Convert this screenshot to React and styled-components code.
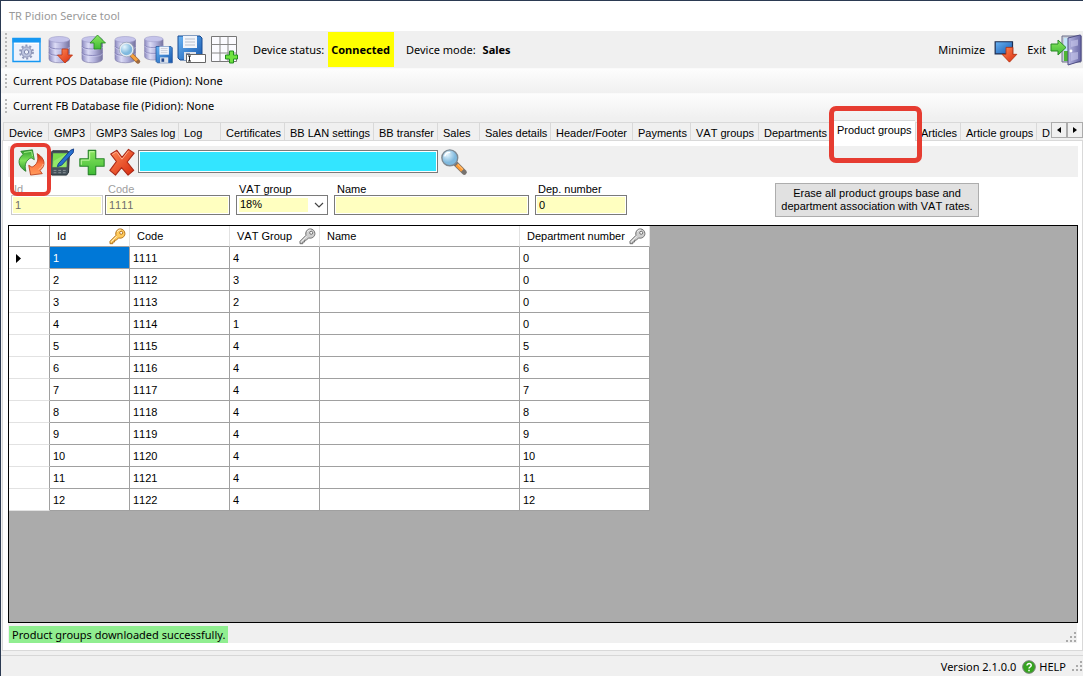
import React from "react";
import styled, { createGlobalStyle, css } from "styled-components";

const ui = `"Noto Sans", "Open Sans", sans-serif`;
const classic = `"Liberation Sans", Arial, sans-serif`;

const GlobalStyle = createGlobalStyle`
  * { box-sizing: border-box; }
  html, body { margin: 0; padding: 0; background: #f0f0f0; }
  body { font-family: ${classic}; font-size: 11px; line-height: 13px; font-kerning: none; color: #000; }
  button, input, select { font: inherit; font-kerning: none; color: inherit; margin: 0; }
`;

const Window = styled.div`
  min-height: 100vh;
  display: flex;
  flex-direction: column;
  border-top: 1px solid #2b3a52;
  border-left: 1px solid #2b3a52;
  background: #f0f0f0;
  overflow: hidden;
`;

const TitleBar = styled.header`
  height: 30px;
  padding: 0 8px;
  display: flex;
  align-items: center;
  background: #fff;
`;

const Title = styled.h1`
  margin: 0;
  font: 400 11px/16px ${ui};
  color: #999;
`;

const Toolbar = styled.div`
  height: 37px;
  padding-left: 4px;
  display: flex;
  align-items: center;
  font: 11px/16px ${ui};
`;

const Grip = styled.span`
  width: 2px;
  height: ${(p) => p.$height}px;
  margin-right: ${(p) => p.$gap}px;
  background: repeating-linear-gradient(#b8b8b8 0 2px, transparent 2px 4px);
`;

const IconButton = styled.button`
  position: relative;
  flex: none;
  width: ${(p) => p.$width || 33}px;
  height: 32px;
  padding: 0;
  border: 0;
  background: none;
  display: flex;
  align-items: center;
  justify-content: center;
  svg { display: block; overflow: visible; }
`;

const StatusLabel = styled.span`
  margin-left: 12px;
  white-space: nowrap;
`;

const StatusValue = styled.strong`
  height: 35px;
  margin-left: 4px;
  padding: 0 4px 0 3px;
  line-height: 35px;
  font-weight: 700;
  background: ${(p) => (p.$highlight ? "#ff0" : "transparent")};
`;

const WindowActions = styled.div`
  margin-left: auto;
  display: flex;
  align-items: center;
  gap: 8px;
`;

const ActionButton = styled.button`
  height: 35px;
  padding: 0;
  border: 0;
  background: none;
  display: flex;
  align-items: center;
  gap: ${(p) => p.$gap}px;
  svg { display: block; }
`;

const FileStrip = styled.div`
  height: 25px;
  padding-left: 4px;
  display: flex;
  align-items: center;
  font: 11px/16px ${ui};
  background: linear-gradient(#fdfdfd, #f0f0f0);
  border-top: 1px solid #fafafa;
`;

const TabStrip = styled.div`
  position: relative;
  z-index: 1;
  height: 23px;
  padding-left: 2px;
  display: flex;
  align-items: flex-end;
`;

const Tab = styled.button`
  position: relative;
  flex: none;
  width: ${(p) => p.$width}px;
  height: 19px;
  padding: 3px 0 0 5px;
  text-align: left;
  white-space: nowrap;
  border: 1px solid #d9d9d9;
  border-width: 1px 0 1px 1px;
  background: #f0f0f0;
  ${(p) =>
    p.$selected &&
    css`
      z-index: 2;
      height: 21px;
      padding-top: 0;
      border-bottom-color: #fff;
      background: #fff;
    `}
`;

const TabScroller = styled.div`
  position: absolute;
  z-index: 3;
  right: 0;
  bottom: 3px;
  display: flex;
`;

const ScrollButton = styled.button`
  width: 16px;
  height: 16px;
  padding: 0;
  border: 1px solid #acacac;
  background: #f0f0f0;
  display: flex;
  align-items: center;
  justify-content: center;
`;

const Highlight = styled.span`
  position: absolute;
  z-index: 5;
  inset: ${(p) => p.$inset};
  border: ${(p) => p.$weight}px solid #e63c31;
  border-radius: 7px;
  pointer-events: none;
`;

const Panel = styled.main`
  flex: 1;
  margin: -1px 0 0 1px;
  padding: 5px 4px 7px 5px;
  display: flex;
  flex-direction: column;
  background: #fff;
  border: 1px solid #d9d9d9;
`;

const PanelTools = styled.div`
  height: 31px;
  padding-left: 9px;
  display: flex;
  align-items: center;
  background: #f0f0f0;
`;

const SearchInput = styled.input`
  width: 300px;
  height: 23px;
  margin: 0 1px;
  padding: 0 3px;
  background: #33e5ff;
  border: 1px solid #7a7a7a;
  outline: 1px solid #fff;
  outline-offset: -2px;
`;

const Form = styled.form`
  padding: 6px 0 0 3px;
  display: flex;
  align-items: flex-start;
  gap: 6px;
  height: 48px;
`;

const PairedFields = styled.div`
  display: flex;
  gap: 2px;
`;

const Field = styled.label`
  display: flex;
  flex-direction: column;
  width: ${(p) => p.$width}px;
  color: ${(p) => (p.$muted ? "#a0a0a0" : "#000")};
`;

const FieldName = styled.span`
  height: 12px;
  padding-left: 3px;
`;

const TextInput = styled.input`
  width: 100%;
  height: 20px;
  padding: 0 3px;
  background: #ffffc0;
  border: 1px solid #7a7a7a;
  outline: 1px solid #fff;
  outline-offset: -2px;
  color: #000;
  &:disabled { color: #6d6d6d; }
  ${(p) => p.$faint && css`border-color: #ccc;`}
`;

const SelectBox = styled.span`
  position: relative;
  display: block;
  svg { position: absolute; right: 4px; top: 7px; pointer-events: none; }
`;

const Select = styled.select`
  appearance: none;
  display: block;
  width: 100%;
  height: 20px;
  padding: 0 19px 1px 3px;
  border: 1px solid #7a7a7a;
  border-radius: 0;
  background: linear-gradient(#ffffc0, #ffffc0) 2px 2px / 69px 14px no-repeat #fff;
`;

const EraseButton = styled.button`
  width: 204px;
  height: 34px;
  margin-left: 142px;
  padding: 0;
  border: 1px solid #adadad;
  background: #e1e1e1;
  text-align: center;
`;

const GridArea = styled.section`
  flex: 1;
  background: #ababab;
  border: 1px solid #000;
`;

const Table = styled.table`
  width: 641px;
  table-layout: fixed;
  border-collapse: separate;
  border-spacing: 0;
  background: #fff;
`;

const HeadCell = styled.th`
  height: 21px;
  padding: 0 3px 0 7px;
  font-weight: 400;
  text-align: left;
  border-right: 1px solid #e2e2e2;
  border-bottom: 1px solid #a0a0a0;
  &:first-child { border-right-color: #a0a0a0; }
`;

const HeadContent = styled.span`
  display: flex;
  align-items: center;
  justify-content: space-between;
  height: 20px;
  white-space: nowrap;
`;

const Cell = styled.td`
  height: 22px;
  padding: 2px 3px 0;
  border-right: 1px solid #a0a0a0;
  border-bottom: 1px solid #a0a0a0;
  ${(p) => p.$selected && css`background: #0078d7; color: #fff;`}
`;

const RowMarker = styled.th`
  height: 22px;
  padding: 2px 0 0 7px;
  border-right: 1px solid #a0a0a0;
  border-bottom: 1px solid #e2e2e2;
  svg { display: block; }
`;

const MessageBar = styled.div`
  height: 20px;
  padding-left: 1px;
  margin-right: 1px;
  display: flex;
  align-items: flex-end;
  justify-content: space-between;
  background: #f0f0f0;
`;

const Message = styled.output`
  height: 17px;
  padding: 0 3px;
  font: 11px/17px ${ui};
  background: #90ee90;
`;

const Footer = styled.footer`
  height: 21px;
  margin-top: 4px;
  padding-top: 1px;
  border-top: 1px solid #d7d7d7;
  display: flex;
  align-items: center;
  justify-content: flex-end;
  gap: 6px;
  font: 11px/16px ${ui};
`;

const HelpButton = styled.button`
  padding: 0;
  border: 0;
  background: none;
  display: flex;
  align-items: center;
  gap: 3px;
`;

/* ---------- icons ---------- */

const Defs = () => (
  <svg width="0" height="0" style={{ position: "absolute" }} aria-hidden="true">
    <defs>
      <linearGradient id="db" x1="0" x2="1"><stop offset="0" stopColor="#8b89c0" /><stop offset=".3" stopColor="#dcdcf6" /><stop offset=".6" stopColor="#b3b2dc" /><stop offset="1" stopColor="#75739f" /></linearGradient>
      <linearGradient id="green" x1="0" y1="0" x2="1" y2="1"><stop offset="0" stopColor="#8fee65" /><stop offset="1" stopColor="#1f9a1e" /></linearGradient>
      <linearGradient id="leaf" x1="0" y1="0" x2="0" y2="1"><stop offset="0" stopColor="#2f9c2c" /><stop offset=".5" stopColor="#7fe25a" /><stop offset="1" stopColor="#2c9a2b" /></linearGradient>
      <linearGradient id="cross" x1="0" y1="0" x2="0" y2="1"><stop offset="0" stopColor="#8be560" /><stop offset="1" stopColor="#3fbb35" /></linearGradient>
      <linearGradient id="red" x1="0" y1="0" x2="1" y2="1"><stop offset="0" stopColor="#ff8a55" /><stop offset="1" stopColor="#d8290e" /></linearGradient>
      <linearGradient id="flame" x1="0" y1="0" x2="0" y2="1"><stop offset="0" stopColor="#ff9a5c" /><stop offset=".5" stopColor="#ff7a45" /><stop offset="1" stopColor="#c92a10" /></linearGradient>
      <linearGradient id="blue" x1="0" y1="0" x2="1" y2="1"><stop offset="0" stopColor="#6ab4f4" /><stop offset="1" stopColor="#1557ae" /></linearGradient>
      <radialGradient id="lens" cx=".35" cy=".3"><stop offset="0" stopColor="#e6f6fe" /><stop offset="1" stopColor="#7fb9de" /></radialGradient>
      <linearGradient id="door" x1="0" x2="1"><stop offset="0" stopColor="#b9b9e2" /><stop offset="1" stopColor="#6665a5" /></linearGradient>
    </defs>
  </svg>
);

const Icon = ({ size = 30, children }) => (
  <svg width={size} height={size} viewBox="0 0 30 30" aria-hidden="true">{children}</svg>
);

const Cylinder = () => (
  <g>
    <path d="M4 5v19c0 5 20.500 5 20.500 0V5z" fill="url(#db)" stroke="#8684ad" strokeWidth=".7" />
    <path d="M4 11c0 4 20.500 4 20.500 0M4 17.500c0 4 20.500 4 20.500 0" fill="none" stroke="#8482b8" strokeWidth=".9" />
    <path d="M4 12c0 4 20.500 4 20.500 0M4 18.500c0 4 20.500 4 20.500 0" fill="none" stroke="#dcdcf6" strokeWidth=".6" opacity=".8" />
    <ellipse cx="14.250" cy="4.500" rx="10.250" ry="3" fill="#c5c4ea" stroke="#9c9bc8" strokeWidth=".6" />
  </g>
);

const Floppy = ({ d }) => (
  <g transform={d}>
    <path d="M0 0h22l2 2v22H2l-2-2z" fill="url(#blue)" stroke="#174a92" />
    <path d="M5 0h14v12H5z" fill="#f2f5fb" />
    <path d="M7 3h10M7 6h10M7 9h10" stroke="#b9c0cc" />
    <path d="M6 16h12v8H6z" fill="#dfe3ea" />
    <path d="M8 17.500h4v5H8z" fill="#25488c" />
  </g>
);

const Key = ({ gold }) => {
  const fill = gold ? "#ffcb5c" : "#cfcfcf";
  const line = gold ? "#b5741c" : "#6f6f6f";
  return (
    <svg width="17" height="17" viewBox="0 0 17 17" aria-hidden="true">
      <path d="M7 7.300L1 13.300v2.400h2.800v-1.700h1.800v-1.800h1.700l2.300-2.300c3 1 6.300-1 6.300-4.300 0-2.600-2-4.700-4.600-4.700-3.200 0-5.200 3.200-4.300 6.400z" fill={fill} stroke={line} />
      <path d="M8.300 3.800c.8-1.500 2-1.900 3.500-1.700M2.300 13.600L7.600 8.300" fill="none" stroke="#fff" opacity=".7" />
      <circle cx="12.200" cy="4.800" r="1.500" fill="#fff" stroke={line} />
    </svg>
  );
};

const SettingsIcon = () => (
  <Icon>
    <path d="M1 3.500h27v23H1z" fill="#eef2fc" stroke="#1597f2" strokeWidth="1.400" />
    <path d="M.5 3H28.500v4.500H.5z" fill="#1597f2" />
    <path d="M2 8.500h25" stroke="#fff" />
    <circle cx="14.500" cy="17" r="5.200" fill="#bcc3de" stroke="#8a92b5" />
    <circle cx="14.500" cy="17" r="6.500" fill="none" stroke="#8f97ba" strokeWidth="1.800" strokeDasharray="2.100 2" />
    <circle cx="14.500" cy="17" r="2.200" fill="#eef2fc" stroke="#8088ad" />
  </Icon>
);
const DbDownIcon = () => <Icon><Cylinder /><path d="M17 14h6v6h4.500L20 28l-7.500-8H17z" fill="url(#red)" stroke="#bd3512" strokeWidth=".8" /></Icon>;
const DbUpIcon = () => <Icon><Cylinder /><path d="M16 14h7V8h4.500L19.500 0 12 8h4z" fill="url(#cross)" stroke="#238820" strokeWidth=".8" /></Icon>;
const DbFindIcon = () => (
  <Icon>
    <Cylinder />
    <path d="M20 19.500l7 7" stroke="#9c6a42" strokeWidth="4.500" strokeLinecap="round" />
    <path d="M20 19.500l6 6" stroke="#f7a23d" strokeWidth="3" />
    <circle cx="15.500" cy="14.500" r="6.500" fill="url(#lens)" stroke="#e7ecf2" strokeWidth="1.500" />
    <circle cx="15.500" cy="14.500" r="7.300" fill="none" stroke="#8998a8" strokeWidth=".6" />
  </Icon>
);
const DbSaveIcon = () => <Icon><g transform="translate(-3 0) scale(.9)"><Cylinder /></g><Floppy d="translate(12 11.500) scale(.68)" /></Icon>;
const SaveAsIcon = () => (
  <Icon>
    <Floppy d="translate(1 1)" />
    <path d="M9.500 19.500h19v8h-19z" fill="#fff" stroke="#666" />
    <path d="M11 21h3M11 26h3M12.500 21v5" stroke="#222" />
  </Icon>
);
const GridAddIcon = () => (
  <Icon>
    <path d="M1.500 1.500h25v25h-25z" fill="#fbfbff" stroke="#777" />
    <path d="M10 1.500v25M18 1.500v25M1.500 9.500h25M1.500 18h25" stroke="#888" />
    <path d="M19.500 16h4v4h4v4h-4v4h-4v-4h-4v-4h4z" fill="#6fe23f" stroke="#218c1e" />
  </Icon>
);
const RefreshIcon = () => {
  const arrow = "M8.500 25C-.5 20-1 11.500 5.500 7L3 3.500l12.500-1.500 2 10.500-3.500-2C8.500 13 6.500 18 8.500 25z";
  return (
    <Icon size={28}>
      <path d={arrow} fill="url(#leaf)" stroke="#287f29" strokeWidth=".9" strokeLinejoin="round" />
      <path d="M6.500 4.800l8-1.200 1 5" fill="none" stroke="#b5f596" strokeWidth=".9" />
      <g transform="rotate(180 14.500 15.500)">
        <path d={arrow} fill="url(#flame)" stroke="#b83c18" strokeWidth=".9" strokeLinejoin="round" />
        <path d="M2 14c.5-3 2.500-4.500 5-6" fill="none" stroke="#ffc3a0" strokeWidth=".9" />
      </g>
    </Icon>
  );
};
const EditIcon = () => (
  <Icon size={28}>
    <path d="M5 3h16l2 2-1 21-2 3H4l-2-3L3 5z" fill="#46525b" stroke="#202a30" />
    <path d="M5.500 5.500h15l-.8 15H4.700z" fill="#7cdc4e" />
    <path d="M6 14L20 6v14H5.500z" fill="#a5ef7d" opacity=".6" />
    <path d="M6 24h3M11 24h3M16 24h3M6 26.500h3M11 26.500h3M16 26.500h3" stroke="#8d979c" />
    <path d="M11 17L24 2.500 27.500 1l-.5 4-12.500 13.500L10 20z" fill="#266fce" stroke="#123d88" />
  </Icon>
);
const AddIcon = () => <Icon size={28}><path d="M11 2.500h8v9h9v8h-9v9h-8v-9H2v-8h9z" fill="url(#cross)" stroke="#2a862b" strokeWidth="1.200" strokeLinejoin="round" /><path d="M12.500 12.500V4h5M3.500 18v-5h9" fill="none" stroke="#c7f7aa" /></Icon>;
const DeleteIcon = () => <Icon size={28}><path d="M9.500 2.500L15 10l7-8.500 6 4L20.500 15l7 9-6 5L14.500 21 8 29l-6-5 7-9.500L3 6.500z" fill="url(#red)" stroke="#aa2816" strokeWidth="1.200" strokeLinejoin="round" /><path d="M4.500 7L9 4l6 8 7-9" fill="none" stroke="#ffb095" /></Icon>;
const SearchIcon = () => (
  <Icon size={28}>
    <path d="M17 17l9 9" stroke="#77726e" strokeWidth="5.500" strokeLinecap="round" />
    <path d="M18 18l6 6" stroke="#ff9b32" strokeWidth="4" />
    <path d="M19 17.500l5.500 5.500" stroke="#ffd49a" />
    <circle cx="10.500" cy="10.500" r="8.500" fill="url(#lens)" stroke="#7e8992" strokeWidth="1.500" />
    <path d="M5 9c1-3 3-4.500 6-4" fill="none" stroke="#fff" strokeWidth="1.500" />
  </Icon>
);
const MinimizeIcon = () => <Icon size={26}><path d="M2.500 5.500h20v14h-20z" fill="url(#blue)" stroke="#1c2d50" strokeWidth="1.400" /><path d="M15 12h8v8h4.500L19 29l-8.500-9H15z" fill="url(#red)" stroke="#b33211" /></Icon>;
const ExitIcon = () => (
  <svg width="33" height="32" viewBox="0 0 33 32" aria-hidden="true">
    <path d="M12 2h19v26H12z" fill="#c8cfda" stroke="#6d6e8a" />
    <path d="M14 4h6v14h-6z" fill="#c3e5fb" /><path d="M14 17h6v10h-6z" fill="#4eb535" />
    <path d="M18 4l12-3q1 0 1 1v25l-13 4z" fill="url(#door)" stroke="#4e4d83" />
    <path d="M21 7l7-1.500v6L21 13zM21 19l7-1v7l-7 2z" fill="#c5c5ea" opacity=".65" />
    <circle cx="21" cy="17" r="1.400" fill="#fff" />
    <path d="M1 10h7V6l8 7.500L8 21v-4H1z" fill="url(#cross)" stroke="#298a26" />
  </svg>
);
const HelpIcon = () => (
  <svg width="14" height="14" viewBox="0 0 14 14" aria-hidden="true">
    <circle cx="7" cy="7" r="6.300" fill="#35a51f" stroke="#777e77" />
    <path d="M5 5.500c0-2.600 4.200-2.500 4.200 0C9.200 7 7 7 7 8.600M7 9.800v1.500" fill="none" stroke="#fff" strokeWidth="1.500" />
  </svg>
);
const SizeGrip = () => (
  <svg width="11" height="11" viewBox="0 0 11 11" aria-hidden="true">
    <path d="M8 0h2v2H8zM4 4h2v2H4zM8 4h2v2H8zM0 8h2v2H0zM4 8h2v2H4zM8 8h2v2H8z" fill="#aaa" />
  </svg>
);

/* ---------- data ---------- */

const mainTools = [
  ["Settings", SettingsIcon], ["Download database", DbDownIcon], ["Upload database", DbUpIcon],
  ["Browse database", DbFindIcon], ["Save database", DbSaveIcon], ["Save as", SaveAsIcon], ["Add table", GridAddIcon],
];

const tabs = [
  ["Device", 45], ["GMP3", 42], ["GMP3 Sales log", 88], ["Log", 42], ["Certificates", 64],
  ["BB LAN settings", 89], ["BB transfer", 64], ["Sales", 42], ["Sales details", 71],
  ["Header/Footer", 82], ["Payments", 58], ["VAT groups", 68], ["Departments", 73],
  ["Product groups", 84], ["Articles", 45], ["Article groups", 76], ["D", 60],
];

const rows = [
  [1, 1111, 4, "", 0], [2, 1112, 3, "", 0], [3, 1113, 2, "", 0], [4, 1114, 1, "", 0],
  [5, 1115, 4, "", 5], [6, 1116, 4, "", 6], [7, 1117, 4, "", 7], [8, 1118, 4, "", 8],
  [9, 1119, 4, "", 9], [10, 1120, 4, "", 10], [11, 1121, 4, "", 11], [12, 1122, 4, "", 12],
];

const columns = [
  ["Id", "gold"], ["Code"], ["VAT Group", "silver"], ["Name"], ["Department number", "silver"],
];

export default function App() {
  return (
    <Window>
      <GlobalStyle />
      <Defs />
      <TitleBar><Title>TR Pidion Service tool</Title></TitleBar>

      <Toolbar>
        <Grip $height={34} $gap={3} />
        {mainTools.map(([name, Glyph]) => (
          <IconButton key={name} aria-label={name}><Glyph /></IconButton>
        ))}
        <StatusLabel>Device status:</StatusLabel>
        <StatusValue $highlight>Connected</StatusValue>
        <StatusLabel>Device mode:</StatusLabel>
        <StatusValue>Sales</StatusValue>
        <WindowActions>
          <ActionButton $gap={8}>Minimize<MinimizeIcon /></ActionButton>
          <ActionButton $gap={4}>Exit<ExitIcon /></ActionButton>
        </WindowActions>
      </Toolbar>
      <FileStrip><Grip $height={14} $gap={6} />Current POS Database file (Pidion): None</FileStrip>
      <FileStrip><Grip $height={14} $gap={6} />Current FB Database file (Pidion): None</FileStrip>

      <TabStrip role="tablist">
        {tabs.map(([name, width]) => {
          const selected = name === "Product groups";
          return (
            <Tab key={name} role="tab" aria-selected={selected} $width={width} $selected={selected}>
              {name}
              {selected && <Highlight $inset="-15px -7px -23px -3px" $weight={5} />}
            </Tab>
          );
        })}
        <TabScroller>
          <ScrollButton aria-label="Scroll tabs left"><svg width="4" height="6" viewBox="0 0 4 6"><path d="M4 0v6L0 3z" /></svg></ScrollButton>
          <ScrollButton aria-label="Scroll tabs right"><svg width="4" height="6" viewBox="0 0 4 6"><path d="M0 0v6l4-3z" /></svg></ScrollButton>
        </TabScroller>
      </TabStrip>

      <Panel>
        <PanelTools>
          <IconButton $width={30} aria-label="Refresh">
            <RefreshIcon />
            <Highlight $inset="-3px -4px -18px -7px" $weight={4} />
          </IconButton>
          <IconButton $width={30} aria-label="Edit"><EditIcon /></IconButton>
          <IconButton $width={30} aria-label="Add"><AddIcon /></IconButton>
          <IconButton $width={30} aria-label="Delete"><DeleteIcon /></IconButton>
          <SearchInput aria-label="Search" />
          <IconButton $width={30} aria-label="Find"><SearchIcon /></IconButton>
        </PanelTools>

        <Form onSubmit={(e) => e.preventDefault()}>
          <PairedFields>
            <Field $width={92} $muted><FieldName>Id</FieldName><TextInput $faint disabled defaultValue="1" /></Field>
            <Field $width={125} $muted><FieldName>Code</FieldName><TextInput disabled defaultValue="1111" /></Field>
          </PairedFields>
          <Field $width={92}>
            <FieldName>VAT group</FieldName>
            <SelectBox>
              <Select defaultValue="18%"><option>18%</option></Select>
              <svg width="10" height="6" viewBox="0 0 10 6"><path d="M1 1l4 4 4-4" fill="none" stroke="#444" strokeWidth="1.200" /></svg>
            </SelectBox>
          </Field>
          <Field $width={195}><FieldName>Name</FieldName><TextInput /></Field>
          <Field $width={92}><FieldName>Dep. number</FieldName><TextInput defaultValue="0" /></Field>
          <EraseButton type="button">Erase all product groups base and department association with VAT rates.</EraseButton>
        </Form>

        <GridArea>
          <Table>
            <colgroup>
              <col width="41" /><col width="80" /><col width="100" /><col width="90" /><col width="200" /><col width="130" />
            </colgroup>
            <thead>
              <tr>
                <HeadCell aria-label="Current row" />
                {columns.map(([name, key]) => (
                  <HeadCell key={name} scope="col">
                    <HeadContent>{name}{key && <Key gold={key === "gold"} />}</HeadContent>
                  </HeadCell>
                ))}
              </tr>
            </thead>
            <tbody>
              {rows.map((row, r) => (
                <tr key={row[0]}>
                  <RowMarker scope="row">
                    {r === 0 && <svg width="5" height="9" viewBox="0 0 5 9"><path d="M0 0l5 4.500L0 9z" /></svg>}
                  </RowMarker>
                  {row.map((value, c) => (
                    <Cell key={c} $selected={r === 0 && c === 0}>{value}</Cell>
                  ))}
                </tr>
              ))}
            </tbody>
          </Table>
        </GridArea>
        <MessageBar>
          <Message>Product groups downloaded successfully.</Message>
          <SizeGrip />
        </MessageBar>
      </Panel>

      <Footer>
        <span>Version 2.1.0.0</span>
        <HelpButton><HelpIcon />HELP</HelpButton>
        <SizeGrip />
      </Footer>
    </Window>
  );
}
